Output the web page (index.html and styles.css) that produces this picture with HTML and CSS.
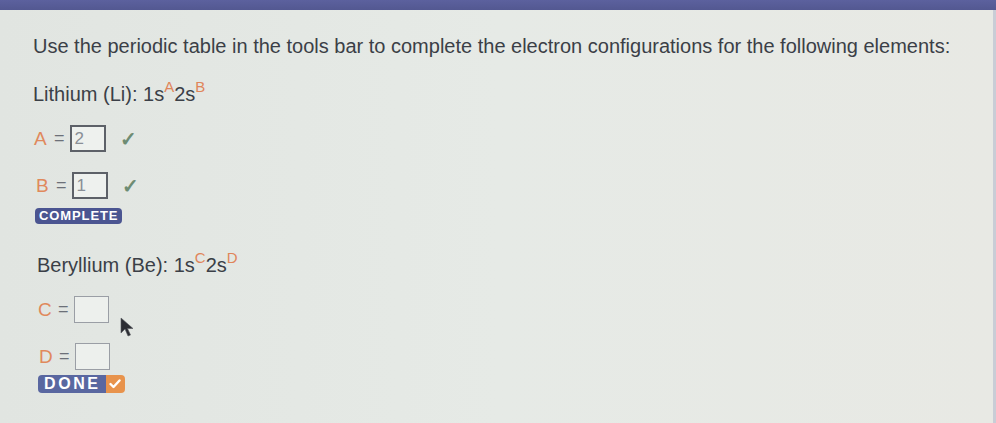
FILE: index.html
```html
<!DOCTYPE html>
<html>
<head>
<meta charset="utf-8">
<link rel="stylesheet" href="styles.css">
</head>
<body>
<div class="topbar"></div>
<div class="panel">
  <p class="prompt">Use the periodic table in the tools bar to complete the electron configurations for the following elements:</p>

  <section class="element el-li">
    <p class="formula">Lithium (Li): 1s<sup>A</sup>2s<sup>B</sup></p>
    <div class="row row-a"><span class="lbl">A</span><span class="eq">=</span><span class="box">2</span><span class="check">&#10003;</span></div>
    <div class="row row-b"><span class="lbl">B</span><span class="eq">=</span><span class="box">1</span><span class="check">&#10003;</span></div>
    <span class="complete">COMPLETE</span>
  </section>

  <section class="element el-be">
    <p class="formula">Beryllium (Be): 1s<sup>C</sup>2s<sup>D</sup></p>
    <div class="row row-c"><span class="lbl">C</span><span class="eq">=</span><span class="box"></span>
      <svg class="cursor" width="16" height="20" viewBox="0 0 16 20"><path d="M1 1 L1 16 L5 12 L8 19 L10.5 18 L7.5 11.5 L13 11.5 Z" fill="#2b2d33" stroke="#55575e" stroke-width="0.6"/></svg>
    </div>
    <div class="row row-d"><span class="lbl">D</span><span class="eq">=</span><span class="box"></span></div>
    <span class="done"><span class="done-txt">DONE</span><span class="done-chk"><svg width="12" height="10" viewBox="0 0 12 10"><path d="M1.5 5 L4.5 8 L10.5 1.5" fill="none" stroke="#fff" stroke-width="2.4" stroke-linecap="round" stroke-linejoin="round"/></svg></span></span>
  </section>
</div>
</body>
</html>
```

FILE: styles.css
```css
html, body {
  margin: 0;
  padding: 0;
}
body {
  width: 996px;
  height: 423px;
  overflow: hidden;
  background: #e2e6e2;
  font-family: "Liberation Sans", Arial, sans-serif;
  color: #3b3f47;
}
.topbar {
  height: 10px;
  background: linear-gradient(#5c619e, #535891);
  box-shadow: 0 1px 2px rgba(40,40,70,0.35);
}
.panel {
  position: relative;
  height: 413px;
  padding-left: 33px;
  background: linear-gradient(90deg, #e1e5e1 0%, #e6eae6 50%, #e8e9e4 100%);
  border-right: 3px solid #c9cdd6;
  box-sizing: border-box;
}
.prompt {
  margin: 0;
  padding-top: 25px;
  font-size: 20px;
  line-height: 22px;
}
.element {
  display: flex;
  flex-direction: column;
  align-items: flex-start;
}
.formula {
  margin: 0;
  font-size: 20px;
  line-height: 22px;
}
.formula sup {
  color: #e0855a;
  font-size: 15px;
  vertical-align: 0;
  position: relative;
  top: -9px;
  line-height: 0;
}
.el-li .formula { margin-top: 26px; }
.el-be { padding-left: 4px; }
.el-be .formula { margin-top: 30px; }
.row {
  display: flex;
  align-items: center;
  height: 27px;
  position: relative;
}
.lbl {
  color: #e0895c;
  font-size: 19px;
  width: 14px;
  margin-left: 1px;
}
.eq {
  color: #6c7078;
  font-size: 18px;
  margin-left: 6px;
  margin-right: 5px;
}
.box {
  box-sizing: border-box;
  width: 36px;
  height: 27px;
  border: 2px solid #5d6168;
  background: #eef1ee;
  color: #8a8f96;
  font-size: 17px;
  line-height: 23px;
  padding-left: 3px;
}
.check {
  color: #6e8c73;
  font-size: 20px;
  font-weight: bold;
  margin-left: 14px;
}
.row-a { margin-top: 20px; }
.row-b { margin-top: 20px; margin-left: 2px; }
.el-be .box {
  border: 1.5px solid #9a9ea5;
  background: #edf0ed;
  width: 35px;
}
.row-c { margin-top: 20px; }
.row-d { margin-top: 20px; margin-left: 1px; }
.cursor {
  position: absolute;
  left: 83px;
  top: 21px;
}
.complete {
  margin-top: 9px;
  margin-left: 2px;
  background: #4b5591;
  color: #fff;
  font-weight: bold;
  font-size: 13px;
  letter-spacing: 0.9px;
  line-height: 16px;
  height: 16px;
  padding: 0 4px;
  border-radius: 4px;
}
.done {
  margin-top: 5px;
  margin-left: 1px;
  display: flex;
  height: 18px;
  border-radius: 4px;
  overflow: hidden;
}
.done-txt {
  background: #5967a0;
  color: #fff;
  font-weight: bold;
  font-size: 16px;
  letter-spacing: 2.6px;
  line-height: 18px;
  padding: 0 5px 0 6px;
}
.done-chk {
  background: #e8934c;
  width: 19px;
  display: flex;
  align-items: center;
  justify-content: center;
}
```
